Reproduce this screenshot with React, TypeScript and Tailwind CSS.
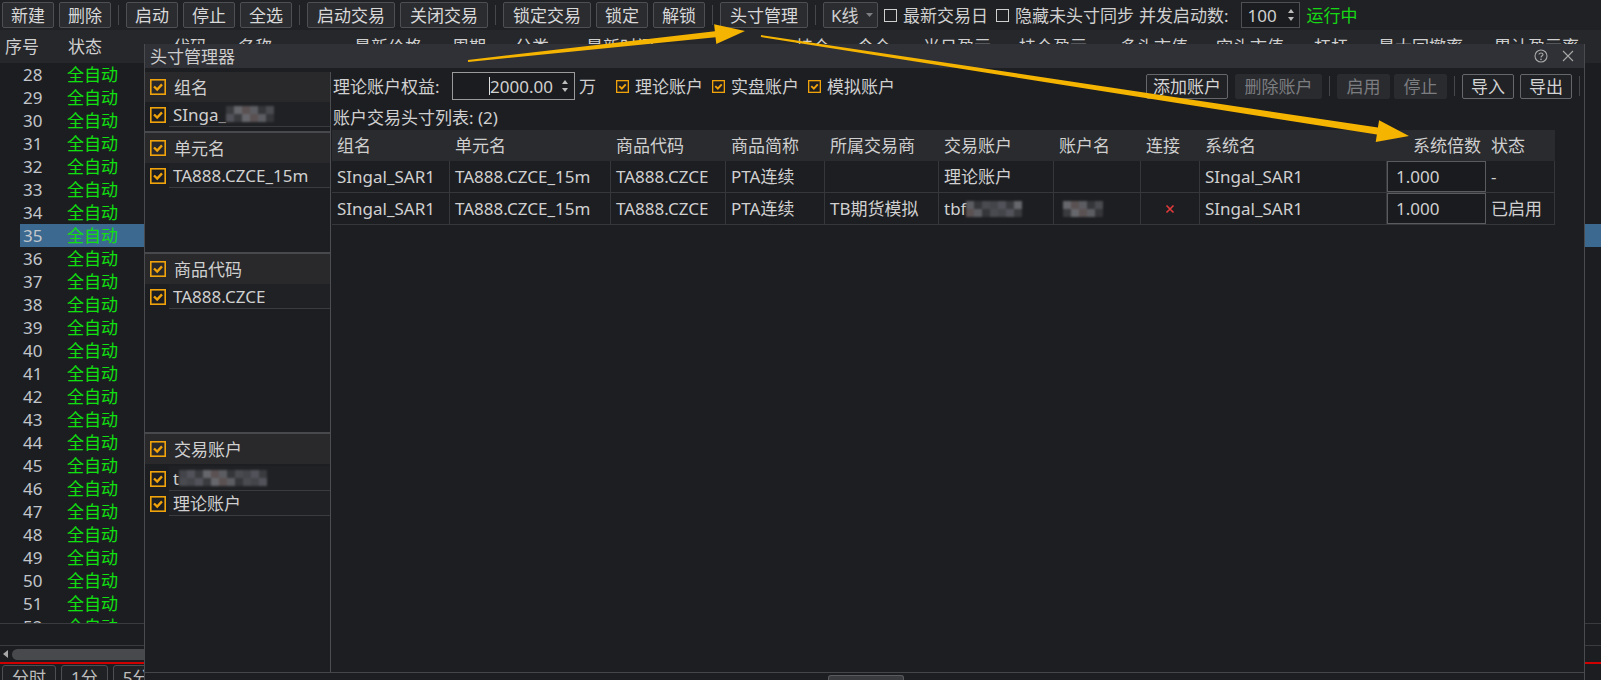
import React from 'react';

const rowNums = Array.from({ length: 25 }, (_, i) => 28 + i);

const bgCols: [string, number][] = [
  ['代码', 65], ['名称', 116], ['最新价格', 98], ['周期', 63], ['分类', 71], ['最新时间', 210],
  ['持仓', 61], ['今仓', 66], ['当日盈亏', 96], ['持仓盈亏', 101], ['多头市值', 96],
  ['空头市值', 98], ['杠杆', 64], ['最大回撤率', 116], ['累计盈亏率', 120],
];

const tableCols = [118, 161, 115, 99, 114, 115, 87, 59, 187, 99, 69];
const tableHead = ['组名', '单元名', '商品代码', '商品简称', '所属交易商', '交易账户', '账户名', '连接', '系统名', '系统倍数', '状态'];

const shades = ['bg-[#4a4b50]', 'bg-[#3a3b3f]', 'bg-[#5c5d62]', 'bg-[#44454a]', 'bg-[#66676c]', 'bg-[#35363a]', 'bg-[#52535a]', 'bg-[#5a5152]'];

function Mosaic({ cols, seed }: { cols: number; seed: number }) {
  return (
    <div className="flex flex-col blur-[1px]">
      {[0, 1].map((r) => (
        <div key={r} className="flex">
          {Array.from({ length: cols }, (_, c) => (
            <div key={c} className={`w-[8px] h-[8px] ${shades[(c * 3 + r * 5 + seed) % shades.length]}`} />
          ))}
        </div>
      ))}
    </div>
  );
}

function TBtn({ label }: { label: string }) {
  const wide = label.length > 2;
  return (
    <div
      className={`h-[26px] flex items-center border border-[#4e4f53] rounded-[2px] bg-[#2b2c30] text-[#d8d8d8] whitespace-nowrap ${
        wide ? 'px-[9px]' : 'px-[8px]'
      }`}
    >
      {label}
    </div>
  );
}

function Sep() {
  return <div className="w-px h-[20px] bg-[#46474b] mx-[2px]" />;
}

function OCheck({ size = 16 }: { size?: number }) {
  return (
    <svg width={size} height={size} viewBox="0 0 16 16" className="shrink-0">
      <rect x="0.8" y="0.8" width="14.4" height="14.4" fill="none" stroke="#f0a30a" strokeWidth="1.6" />
      <path d="M4 7.5 L7.2 10.6 L12 5.4" fill="none" stroke="#f0a30a" strokeWidth="2.4" />
    </svg>
  );
}

function EmptyCheck() {
  return <div className="w-[13px] h-[13px] border border-[#cfcfcf] shrink-0" />;
}

function SpinArrows() {
  return (
    <svg width="8" height="16" viewBox="0 0 8 16" className="shrink-0">
      <path d="M4 2 L7 6 L1 6 Z" fill="#bdbdbd" />
      <path d="M4 14 L7 10 L1 10 Z" fill="#bdbdbd" />
    </svg>
  );
}

function PanelHeader({ label }: { label: string }) {
  return (
    <div className="h-[30px] flex items-center bg-[#29292c] pl-[5px]">
      <OCheck />
      <span className="ml-[8px]">{label}</span>
    </div>
  );
}

function PanelItem({ children }: { children: React.ReactNode }) {
  return (
    <div className="h-[25px] flex items-center pl-[5px]">
      <OCheck />
      <div className="ml-[3px] flex-1 h-full flex items-center pl-[4px] bg-[#202125] border-b border-[#3a3b3f] whitespace-nowrap overflow-hidden">
        {children}
      </div>
    </div>
  );
}

function DBtn({ label, w, off }: { label: string; w: number; off?: boolean }) {
  return (
    <div
      className={`h-[25px] flex items-center justify-center rounded-[2px] whitespace-nowrap ${
        off ? 'bg-[#2a2b2f] text-[#7c7d80] border border-[#2a2b2f]' : 'bg-[#212226] text-[#d4d4d4] border border-[#66676b]'
      }`}
      style={{ width: w }}
    >
      {label}
    </div>
  );
}

function Cell({ w, children, right, box }: { w: number; children?: React.ReactNode; right?: boolean; box?: boolean }) {
  return (
    <div
      className={`h-full flex items-center shrink-0 whitespace-nowrap overflow-hidden ${
        box ? 'border border-[#5a5b5f] bg-[#1a1b1e] pl-[8px]' : 'border-r border-[#36373b] px-[5px]'
      } ${right ? 'justify-end' : ''}`}
      style={{ width: w }}
    >
      {children}
    </div>
  );
}

export default function App() {
  return (
    <div className="relative w-[1601px] h-[680px] overflow-hidden bg-[#1c1d21] text-[17px] leading-none text-[#d0d0d0] font-['Noto_Sans','Noto_Sans_CJK_SC',sans-serif]">
      {/* toolbar */}
      <div className="h-[30px] flex items-center gap-[5px] pl-[2px] bg-[#202124]">
        <TBtn label="新建" />
        <TBtn label="删除" />
        <Sep />
        <TBtn label="启动" />
        <TBtn label="停止" />
        <TBtn label="全选" />
        <Sep />
        <TBtn label="启动交易" />
        <TBtn label="关闭交易" />
        <Sep />
        <TBtn label="锁定交易" />
        <TBtn label="锁定" />
        <TBtn label="解锁" />
        <Sep />
        <TBtn label="头寸管理" />
        <Sep />
        <div className="h-[26px] w-[55px] flex items-center justify-between pl-[7px] pr-[4px] border border-[#4e4f53] rounded-[2px] bg-[#2b2c30]">
          <span>K线</span>
          <svg width="7" height="5" viewBox="0 0 7 5"><path d="M0 0 L7 0 L3.5 4 Z" fill="#7d7e82" /></svg>
        </div>
        <div className="flex items-center ml-[1px]">
          <EmptyCheck />
          <span className="ml-[6px]">最新交易日</span>
        </div>
        <div className="flex items-center ml-[3px]">
          <EmptyCheck />
          <span className="ml-[6px]">隐藏未头寸同步</span>
        </div>
        <span>并发启动数:</span>
        <div className="ml-[7px] h-[26px] w-[59px] flex items-center justify-between pl-[6px] pr-[4px] border border-[#4e4f53] bg-[#1b1c1f]">
          <span>100</span>
          <SpinArrows />
        </div>
        <span className="ml-[2px] text-[#16d916]">运行中</span>
      </div>

      {/* background grid header */}
      <div className="h-[33px] flex items-center bg-[#26272b] pl-[5px] whitespace-nowrap">
        <div className="w-[63px] shrink-0">序号</div>
        <div className="w-[105px] shrink-0">状态</div>
        {bgCols.map(([t, w]) => (
          <div key={t + w} className="shrink-0" style={{ width: w }}>
            {t}
          </div>
        ))}
      </div>

      {/* background rows */}
      <div className="h-[560px] overflow-hidden">
        {rowNums.map((n) => (
          <div key={n} className="h-[23px] flex pl-[20px]">
            <div className={`flex-1 flex items-center ${n === 35 ? 'bg-[#3c6990]' : ''}`}>
              <span className="w-[47px] pl-[3px] text-[#c2c6cb]">{n}</span>
              <span className="text-[#10e010]">全自动</span>
            </div>
          </div>
        ))}
      </div>
      <div className="h-[22px] border-t border-[#3a3b3f]" />
      <div className="h-[17px] border-t border-[#3a3b3f] flex items-center pl-[3px]">
        <svg width="5" height="8" viewBox="0 0 5 8"><path d="M5 0 L5 8 L0 4 Z" fill="#a8a8a8" /></svg>
        <div className="ml-[4px] h-[11px] w-[300px] rounded-full bg-[#48494d]" />
      </div>
      <div className="h-[2px] bg-[#d00000]" />
      <div className="flex gap-[5px] pl-[2px] pt-[1px]">
        {['分时', '1分', '5分', '15分'].map((t) => (
          <div key={t} className="h-[24px] px-[9px] pt-[3px] border border-[#4e4f53] rounded-t-[3px] bg-[#202124] text-[#bdbdbd]">
            {t}
          </div>
        ))}
      </div>

      {/* dialog */}
      <div className="absolute left-[144px] top-[44px] w-[1441px] h-[636px] flex flex-col bg-[#1d1e22] border-l border-r border-[#4a4b4f] z-10">
        <div className="h-[24px] shrink-0 flex items-center justify-between pl-[5px] pr-[10px] bg-[#303136] text-[#cdcdcd]">
          <span>头寸管理器</span>
          <div className="flex items-center gap-[14px]">
            <svg width="14" height="14" viewBox="0 0 14 14">
              <circle cx="7" cy="7" r="6" fill="none" stroke="#a8a8a8" strokeWidth="1.1" />
              <path d="M5 5.4 C5 3.6 9 3.6 9 5.4 C9 6.8 7 6.8 7 8.6" fill="none" stroke="#a8a8a8" strokeWidth="1.1" />
              <circle cx="7" cy="10.4" r="0.8" fill="#a8a8a8" />
            </svg>
            <svg width="12" height="12" viewBox="0 0 12 12">
              <path d="M1 1 L11 11 M11 1 L1 11" stroke="#a8a8a8" strokeWidth="1.1" />
            </svg>
          </div>
        </div>

        <div className="flex-1 flex border-b border-[#45464a] pt-[4px] min-h-0">
          {/* left filter panel */}
          <div className="w-[186px] shrink-0 flex flex-col border-r border-[#4c4d51]">
            <div className="h-[59px]">
              <PanelHeader label="组名" />
              <PanelItem>
                <span>SInga</span>
                <span className="text-[#8a8a8a]">_</span>
                <Mosaic cols={6} seed={1} />
              </PanelItem>
            </div>
            <div className="h-[121px] border-t-2 border-[#48494d]">
              <PanelHeader label="单元名" />
              <PanelItem>TA888.CZCE_15m</PanelItem>
            </div>
            <div className="h-[180px] border-t-2 border-[#48494d]">
              <PanelHeader label="商品代码" />
              <PanelItem>TA888.CZCE</PanelItem>
            </div>
            <div className="flex-1 border-t-2 border-[#48494d]">
              <PanelHeader label="交易账户" />
              <div className="h-[2px]" />
              <PanelItem>
                <span>t</span>
                <Mosaic cols={11} seed={3} />
              </PanelItem>
              <PanelItem>理论账户</PanelItem>
            </div>
          </div>

          {/* right content */}
          <div className="flex-1 flex flex-col min-w-0">
            <div className="h-[28px] flex items-center pl-[2px] pr-[4px]">
              <span className="w-[119px] shrink-0">理论账户权益:</span>
              <div className="w-[123px] h-[28px] flex items-center justify-end pr-[5px] border border-[#9a9a9a] bg-[#1b1c1f]">
                <div className="w-px h-[18px] bg-[#e0e0e0]" />
                <span>2000.00</span>
                <div className="ml-[8px]">
                  <SpinArrows />
                </div>
              </div>
              <span className="ml-[4px]">万</span>
              <div className="ml-[20px] flex items-center">
                <OCheck size={13} />
                <span className="ml-[6px]">理论账户</span>
              </div>
              <div className="ml-[9px] flex items-center">
                <OCheck size={13} />
                <span className="ml-[6px]">实盘账户</span>
              </div>
              <div className="ml-[9px] flex items-center">
                <OCheck size={13} />
                <span className="ml-[6px]">模拟账户</span>
              </div>
              <div className="ml-auto flex items-center">
                <DBtn label="添加账户" w={82} />
                <div className="ml-[7px]">
                  <DBtn label="删除账户" w={87} off />
                </div>
                <div className="w-px h-[20px] bg-[#46474b] mx-[7px]" />
                <DBtn label="启用" w={53} off />
                <div className="ml-[4px]">
                  <DBtn label="停止" w={53} off />
                </div>
                <div className="w-px h-[20px] bg-[#46474b] mx-[7px]" />
                <DBtn label="导入" w={52} />
                <div className="ml-[6px]">
                  <DBtn label="导出" w={52} />
                </div>
                <div className="w-px h-[20px] bg-[#46474b] ml-[7px]" />
              </div>
            </div>
            <div className="h-[30px] flex items-center pt-[4px] pl-[2px]">账户交易头寸列表: (2)</div>

            <div className="ml-[1px] w-[1223px] flex flex-col">
              <div className="h-[31px] flex items-center bg-[#2a2b2e] text-[#cfcfcf]">
                {tableHead.map((t, i) => (
                  <div
                    key={t}
                    className={`h-full flex items-center shrink-0 px-[5px] whitespace-nowrap ${i === 9 ? 'justify-end' : ''}`}
                    style={{ width: tableCols[i] }}
                  >
                    {t}
                  </div>
                ))}
              </div>
              <div className="h-[32px] flex border-b border-[#36373b]">
                <Cell w={tableCols[0]}>SIngal_SAR1</Cell>
                <Cell w={tableCols[1]}>TA888.CZCE_15m</Cell>
                <Cell w={tableCols[2]}>TA888.CZCE</Cell>
                <Cell w={tableCols[3]}>PTA连续</Cell>
                <Cell w={tableCols[4]} />
                <Cell w={tableCols[5]}>理论账户</Cell>
                <Cell w={tableCols[6]} />
                <Cell w={tableCols[7]} />
                <Cell w={tableCols[8]}>SIngal_SAR1</Cell>
                <Cell w={tableCols[9]} box>1.000</Cell>
                <Cell w={tableCols[10]}>-</Cell>
              </div>
              <div className="h-[32px] flex border-b border-[#36373b]">
                <Cell w={tableCols[0]}>SIngal_SAR1</Cell>
                <Cell w={tableCols[1]}>TA888.CZCE_15m</Cell>
                <Cell w={tableCols[2]}>TA888.CZCE</Cell>
                <Cell w={tableCols[3]}>PTA连续</Cell>
                <Cell w={tableCols[4]}>TB期货模拟</Cell>
                <Cell w={tableCols[5]}>
                  <span>tbf</span>
                  <Mosaic cols={7} seed={2} />
                </Cell>
                <Cell w={tableCols[6]}>
                  <div className="ml-[4px]">
                    <Mosaic cols={5} seed={4} />
                  </div>
                </Cell>
                <Cell w={tableCols[7]}>
                  <div className="w-full flex justify-center">
                    <svg width="10" height="10" viewBox="0 0 10 10">
                      <path d="M1.5 1.5 L8.5 8.5 M8.5 1.5 L1.5 8.5" stroke="#e23a3a" strokeWidth="1.6" />
                    </svg>
                  </div>
                </Cell>
                <Cell w={tableCols[8]}>SIngal_SAR1</Cell>
                <Cell w={tableCols[9]} box>1.000</Cell>
                <Cell w={tableCols[10]}>已启用</Cell>
              </div>
            </div>
          </div>
        </div>
        <div className="h-[7px] shrink-0 flex">
          <div className="ml-[683px] mt-[2px] w-[76px] h-[6px] rounded-t-[3px] border-t border-x border-[#5a5b5f] bg-[#3a3b3f]" />
        </div>
      </div>

      {/* annotation arrows */}
      <svg className="absolute left-0 top-0 w-[1601px] h-[680px] pointer-events-none z-20" viewBox="0 0 1601 680">
        <polygon
          fill="#f5b400"
          points="467.9,60 714.9,31.2 714.1,24.3 745,31 716.3,44.1 715.5,37.2 468.1,62"
        />
        <polygon
          fill="#f5b400"
          points="761.15,35 1377.9,127.6 1379.1,120.2 1409,136 1375.7,142 1376.9,134.6 760.85,37"
        />
      </svg>
    </div>
  );
}
